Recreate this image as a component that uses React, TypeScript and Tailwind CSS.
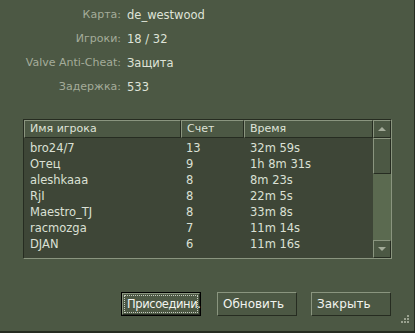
import React from 'react';

const info = [
  ['Карта:', 'de_westwood'],
  ['Игроки:', '18 / 32'],
  ['Valve Anti-Cheat:', 'Защита'],
  ['Задержка:', '533'],
];

const players = [
  ['bro24/7', '13', '32m 59s'],
  ['Отец', '9', '1h 8m 31s'],
  ['aleshkaaa', '8', '8m 23s'],
  ['RjI', '8', '22m 5s'],
  ['Maestro_TJ', '8', '33m 8s'],
  ['racmozga', '7', '11m 14s'],
  ['DJAN', '6', '11m 16s'],
];

const raised = 'border border-t-[#8a957f] border-l-[#8a957f] border-b-[#262c21] border-r-[#262c21]';

function HeaderCell({ label, w }: { label: string; w: string }) {
  return (
    <div className={`${w} h-[18px] ${raised} bg-[#4c5844] pl-[5px] leading-[16px] text-[#dfe3d8]`}>
      {label}
    </div>
  );
}

function ScrollButton({ up }: { up?: boolean }) {
  return (
    <div className={`h-[18px] ${raised} bg-[#4c5844] flex items-center justify-center`}>
      <div
        className={
          up
            ? 'w-0 h-0 border-l-[4px] border-r-[4px] border-b-[4px] border-l-transparent border-r-transparent border-b-[#a4ac9a]'
            : 'w-0 h-0 border-l-[4px] border-r-[4px] border-t-[4px] border-l-transparent border-r-transparent border-t-[#a4ac9a]'
        }
      />
    </div>
  );
}

function Button({ label, focused }: { label: string; focused?: boolean }) {
  if (focused) {
    return (
      <div className="w-[80px] h-[24px] border border-black">
        <div className={`h-full ${raised} bg-[#4c5844] p-[1px]`}>
          <div className="h-full border border-dotted border-[#c8ccc2] pl-[2px] leading-[16px] text-[11.5px] tracking-[-0.4px] text-[#f2f4ef] whitespace-nowrap">
            {label}
          </div>
        </div>
      </div>
    );
  }
  return (
    <div className={`w-[80px] h-[24px] ${raised} bg-[#4c5844] pl-[5px] leading-[22px] text-[12px] text-[#f2f4ef]`}>
      {label}
    </div>
  );
}

export default function App() {
  return (
    <div
      className="relative w-[415px] h-[333px] bg-[#4c5844] border-r border-b-2 border-[#262c21] text-[11px] overflow-hidden"
      style={{ fontFamily: '"DejaVu Sans", Verdana, sans-serif' }}
    >
      {/* сведения о сервере */}
      <div className="pt-[3px] grid grid-cols-[121px_auto]">
        {info.map(([k, v]) => (
          <React.Fragment key={k}>
            <div className="h-6 leading-6 text-right text-[#a4ac9a]">{k}</div>
            <div className="h-6 leading-6 pl-[6px] text-[#dfe3d8] text-[11.5px]">{v}</div>
          </React.Fragment>
        ))}
      </div>

      {/* список игроков */}
      <div className="ml-[23px] mt-[20px] w-[369px] h-[140px] border border-t-[#262c21] border-l-[#262c21] border-b-[#8a957f] border-r-[#8a957f] flex">
        <div className="w-[349px] flex flex-col">
          <div className="flex">
            <HeaderCell label="Имя игрока" w="w-[157px]" />
            <HeaderCell label="Счет" w="w-[63px]" />
            <HeaderCell label="Время" w="w-[129px]" />
          </div>
          <div className="flex-1 bg-[#3e4637] pt-[2px] text-[#dbe0d5] text-[11.5px]">
            {players.map(([n, s, t]) => (
              <div key={n} className="flex h-4 leading-4">
                <div className="w-[157px] pl-[6px]">{n}</div>
                <div className="w-[63px] pl-[5px]">{s}</div>
                <div className="pl-[6px]">{t}</div>
              </div>
            ))}
          </div>
        </div>
        <div className="w-[18px] flex flex-col bg-[#5b6a50]">
          <ScrollButton up />
          <div className={`h-[36px] ${raised} bg-[#4c5844]`} />
          <div className="flex-1" />
          <ScrollButton />
        </div>
      </div>

      {/* кнопки */}
      <div className="mt-[33px] ml-[121px] flex">
        <Button label="Присоедини." focused />
        <div className="ml-[16px]">
          <Button label="Обновить" />
        </div>
        <div className="ml-[14px]">
          <Button label="Закрыть" />
        </div>
      </div>

      {/* уголок изменения размера */}
      <div className="absolute right-[5px] bottom-[8px] grid grid-cols-3 gap-[1px]">
        <span className="w-[2px] h-[2px]" />
        <span className="w-[2px] h-[2px]" />
        <span className="w-[2px] h-[2px] bg-[#9aa290]" />
        <span className="w-[2px] h-[2px]" />
        <span className="w-[2px] h-[2px] bg-[#9aa290]" />
        <span className="w-[2px] h-[2px] bg-[#9aa290]" />
        <span className="w-[2px] h-[2px] bg-[#9aa290]" />
        <span className="w-[2px] h-[2px] bg-[#9aa290]" />
        <span className="w-[2px] h-[2px] bg-[#9aa290]" />
      </div>
    </div>
  );
}
